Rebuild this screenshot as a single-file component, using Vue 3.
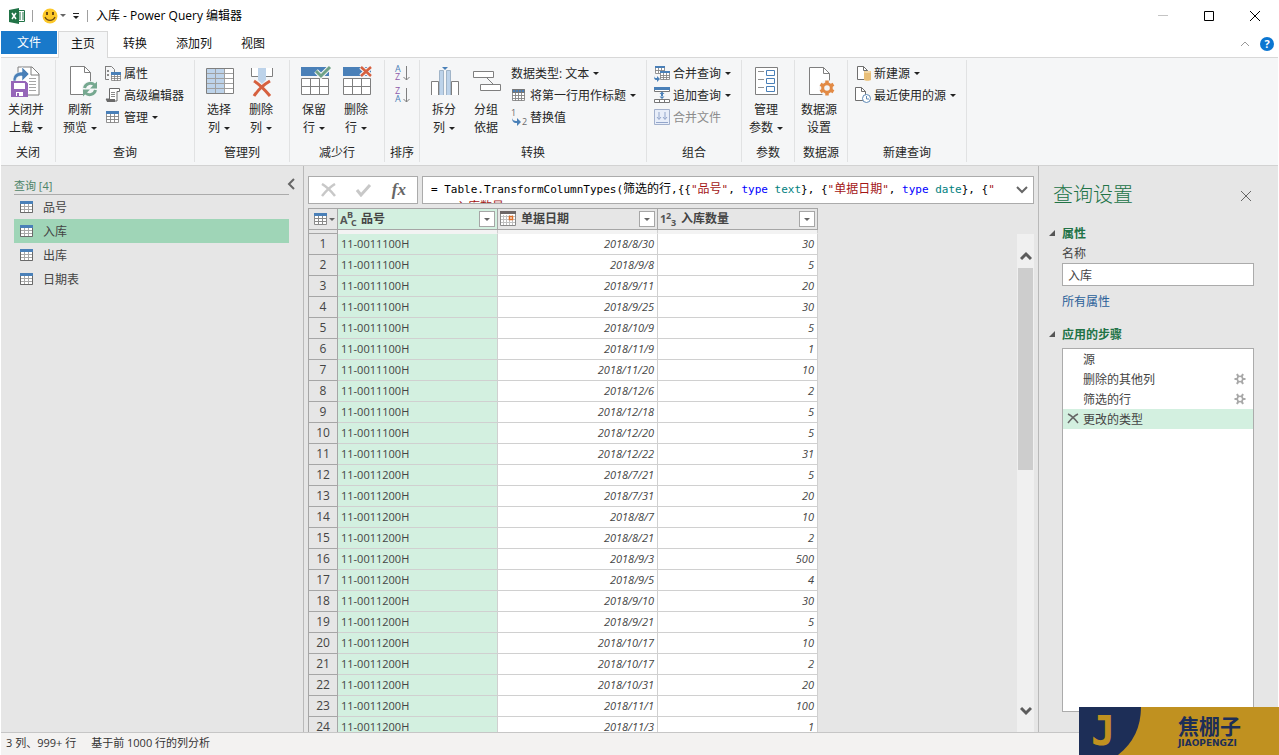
<script setup>
import { ref } from 'vue'

const icons = {
  closeLoad: `<path d="M8 9V2h14l7 7v21H17" fill="#fff" stroke="#7f7f7f"/><path d="M21 2v8h8" fill="none" stroke="#7f7f7f"/><path d="M19 13.500h7M19 16.500h7M19 19.500h7M19 22.500h7M19 25.500h7" stroke="#a6a6a6"/><path d="M3 16c0-7 4-9 9-9V2l7 7-7 7v-5c-4 0-6 1-6 5z" fill="#4a80b8" stroke="#f5f6f7" stroke-width=".6"/><path d="M2 17h13l2 2v12H2z" fill="#fff" stroke="#9566b8" stroke-width="2"/><path d="M2 17h2v8H2zM15 17h2v8h-2zM2 24h15v7H2z" fill="#9566b8"/><path d="M6 27h7v4H6z" fill="#fff"/><path d="M7 28h2v3H7z" fill="#9566b8"/>`,
  refresh: `<path d="M6.500 1.500h14l6 6v22h-20z" fill="#fff" stroke="#7f7f7f"/><path d="M20.500 1.500v6h6" fill="none" stroke="#7f7f7f"/><circle cx="26" cy="24" r="8" fill="#f5f6f7"/><path d="M20.500 23a6 6 0 0 1 10-3M31.500 25a6 6 0 0 1-10 3" fill="none" stroke="#76a890" stroke-width="3"/><path d="M33 16.500v7h-7zM19 31.500v-7h7z" fill="#76a890"/>`,
  chooseCols: `<path d="M3.500 3.500h27v25h-27z" fill="#fff"/><path d="M4 4h18v24H4z" fill="#bdd3ea"/><path d="M12.500 3v25M21.500 3v25M3 8.500h28M3 13.500h28M3 18.500h28M3 23.500h28" stroke="#a0a0a0"/><path d="M3.500 3.500h27v25h-27z" fill="none" stroke="#7f7f7f"/>`,
  removeCols: `<path d="M6.500 3v8.500h7V3M20.500 3v8.500h7V3" fill="#fff" stroke="#7f7f7f"/><path d="M13 3h8v12l-4 4-4-4z" fill="#bdd3ea"/><path d="M9 16c5 3 11 9 16 15M25 16C18 20 13 25 9 31" fill="none" stroke="#d6603f" stroke-width="3"/>`,
  keepRows: `<path d="M3 2h28v9H3z" fill="#4a80b8"/><path d="M3.500 13.500h27v16h-27zM12.500 13v17M21.500 13v17M3 21.500h28" fill="#fff" stroke="#7f7f7f"/><path d="M18 6l5 5 9-9" fill="none" stroke="#f5f6f7" stroke-width="5"/><path d="M18 6l5 5 9-9" fill="none" stroke="#6fa287" stroke-width="3"/>`,
  removeRows: `<path d="M3 2h28v9H3z" fill="#4a80b8"/><path d="M3.500 13.500h27v16h-27zM12.500 13v17M21.500 13v17M3 21.500h28" fill="#fff" stroke="#7f7f7f"/><path d="M21 2l10 9M31 2l-10 9" stroke="#f5f6f7" stroke-width="5"/><path d="M21 2l10 9M31 2l-10 9" stroke="#d6603f" stroke-width="2.500"/>`,
  split: `<path d="M3.500 30V16.500h7V30M30.500 30V16.500h-7V30" fill="#fff" stroke="#7f7f7f"/><path d="M11.500 30V5.500h4V30M22.500 30V5.500h-4V30" fill="#bdd3ea" stroke="#a0b4c8"/><path d="M14 2h6l-3 3z" fill="#4a80b8"/>`,
  group: `<path d="M17 13l6 6" stroke="#7f7f7f"/><path d="M3.500 6.500h20v6h-20zM10.500 19.500h20v6h-20z" fill="#fff" stroke="#7f7f7f"/>`,
  params: `<path d="M5.500 2.500h22v27h-22z" fill="#fff" stroke="#7f7f7f"/><path d="M8 6.500h6M8 14.500h6M8 22.500h6" stroke="#909090"/><path d="M16.500 5.500h8v5h-8zM16.500 13.500h8v5h-8zM16.500 21.500h8v5h-8z" fill="#fff" stroke="#4a80b8"/>`,
  sourceSettings: `<path d="M6.500 2.500h14l6 6v21h-20z" fill="#fff" stroke="#7f7f7f"/><path d="M20.500 2.500v6h6" fill="none" stroke="#7f7f7f"/><circle cx="24" cy="23" r="8" fill="#f5f6f7"/><circle cx="24" cy="23" r="4.300" fill="none" stroke="#e28a45" stroke-width="3"/><path d="M24 15.500v4M24 26.500v4M17.500 19.300l3.200 1.800M27.300 24.900l3.200 1.800M17.500 26.700l3.200-1.800M27.300 21.100l3.200-1.800" stroke="#e28a45" stroke-width="3.500"/>`,
  props: `<path d="M.500 1.500h6l3 3v3M.500 1v13.500H4" fill="none" stroke="#7f7f7f"/><path d="M2 5h2v2H2zM2 9h2v2H2z" fill="#8a8a8a"/><path d="M6.500 8.500h9v7h-9zM9.500 8v8M12.500 8v8M6 11.500h10M6 13.500h10" fill="#fff" stroke="#7f7f7f" stroke-width=".8"/><path d="M6 7h10v3H6z" fill="#4a80b8"/>`,
  script: `<path d="M4.500 12V1.500h10v3h-2.500V14H2.500L1 12z" fill="#fff" stroke="#6a6a6a"/><path d="M1 12h9v3H2z" fill="#6a6a6a"/><path d="M6 5.500h4M6 7.500h4M6 9.500h4" stroke="#8a8a8a"/>`,
  table: `<path d="M1.500 3.500h12v10h-12zM5.500 4v10M9.500 4v10M1 7.500h13M1 10.500h13" fill="#fff" stroke="#858585" stroke-width=".9"/><path d="M1 2h13v3H1z" fill="#4a80b8"/>`,
  firstRow: `<path d="M1.500 2.500h12v11h-12zM4.500 6v8M7.500 6v8M10.500 6v8M1 8.500h13M1 11.500h13" fill="#fff" stroke="#858585" stroke-width=".9"/><path d="M1.500 2.500h12v3h-12zM4.500 3v2M7.500 3v2M10.500 3v2" fill="#4a80b8" stroke="#777"/>`,
  replace: `<text x="0" y="7" font-size="9" fill="#6a6a6a">1</text><text x="11" y="16" font-size="9" fill="#6a6a6a">2</text><path d="M1 8c0 3 2 4 5 4V9l4 4-4 4v-3C2 14 1 12 1 8z" fill="#4a80b8"/>`,
  sortAsc: `<text x="0" y="7" font-size="9" fill="#4a80b8">A</text><text x="0" y="15" font-size="9" fill="#8d5cab">Z</text><path d="M11.500 1v14M8.500 12l3 3 3-3" fill="none" stroke="#7f7f7f"/>`,
  sortDesc: `<text x="0" y="7" font-size="9" fill="#8d5cab">Z</text><text x="0" y="15" font-size="9" fill="#4a80b8">A</text><path d="M11.500 1v14M8.500 12l3 3 3-3" fill="none" stroke="#7f7f7f"/>`,
  merge: `<path d="M1.500 2.500h9v6h-9zM4.500 2v6M7.500 2v6M1 5.500h10" fill="#fff" stroke="#888" stroke-width=".9"/><path d="M1 1h10v2H1z" fill="#4a80b8"/><path d="M6.500 7.500h9v7h-9zM9.500 7v8M12.500 7v8M6 10.500h10M6 12.500h10" fill="#fff" stroke="#888" stroke-width=".9"/><path d="M6 6h10v2H6z" fill="#4a80b8"/><path d="M0 10c0 3 1 3 3 3v-2l3 3-3 3v-2C0 15 0 13 0 10z" fill="#4a80b8"/>`,
  append: `<path d="M.500 1.500h15v3H.500zM.500 12.500h15v3H.500zM5.500 12v4M10.500 12v4" fill="#fff" stroke="#777"/><path d="M0 0h16v3H0z" fill="#4a80b8"/><path d="M8 4.500l2.500 2.500h-5zM8 12l2.500-2.500h-5zM7 7h2v3H7z" fill="#4a80b8"/>`,
  combine: `<path d="M.500 .500h15v15H.500z" fill="#e8eef9" stroke="#a3b1cd"/><path d="M2 13.500h12M5 3v7M3 8l2 2.500L7 8M11 3v7M9 8l2 2.500L13 8" fill="none" stroke="#93a6cb"/>`,
  newSource: `<path d="M2.500 1.500h6l4 4v9h-10z" fill="#fff" stroke="#6f6f6f"/><path d="M8.500 1.500v4h4" fill="none" stroke="#6f6f6f"/><path d="M9 6h7v9c-1 1-6 1-7 0z" fill="#e9bf78"/><ellipse cx="12.500" cy="7" rx="3.500" ry="1" fill="#f3d9a8"/>`,
  recent: `<path d="M.500 .500h6l4 4v9H.500z" fill="#fff" stroke="#6f6f6f"/><path d="M6.500 .500v4h4" fill="none" stroke="#6f6f6f"/><circle cx="11.500" cy="11.500" r="4" fill="#fff" stroke="#5d89b6"/><path d="M11.500 9v3H14" fill="none" stroke="#5d89b6"/>`
}

const groups = [
  { label: '关闭', big: [{ icon: 'closeLoad', lines: ['关闭并', '上载'], caret: true, wide: true }] },
  {
    label: '查询',
    big: [{ icon: 'refresh', lines: ['刷新', '预览'], caret: true }],
    small: [
      { icon: 'props', text: '属性' },
      { icon: 'script', text: '高级编辑器' },
      { icon: 'table', text: '管理', caret: true }
    ]
  },
  {
    label: '管理列',
    big: [
      { icon: 'chooseCols', lines: ['选择', '列'], caret: true },
      { icon: 'removeCols', lines: ['删除', '列'], caret: true }
    ]
  },
  {
    label: '减少行',
    big: [
      { icon: 'keepRows', lines: ['保留', '行'], caret: true },
      { icon: 'removeRows', lines: ['删除', '行'], caret: true }
    ]
  },
  { label: '排序', small: [{ icon: 'sortAsc', aria: '升序排序' }, { icon: 'sortDesc', aria: '降序排序' }], narrow: true },
  {
    label: '转换',
    big: [
      { icon: 'split', lines: ['拆分', '列'], caret: true },
      { icon: 'group', lines: ['分组', '依据'] }
    ],
    small: [
      { text: '数据类型: 文本', caret: true },
      { icon: 'firstRow', text: '将第一行用作标题', caret: true },
      { icon: 'replace', text: '替换值' }
    ]
  },
  {
    label: '组合',
    small: [
      { icon: 'merge', text: '合并查询', caret: true },
      { icon: 'append', text: '追加查询', caret: true },
      { icon: 'combine', text: '合并文件', disabled: true }
    ]
  },
  { label: '参数', big: [{ icon: 'params', lines: ['管理', '参数'], caret: true }] },
  { label: '数据源', big: [{ icon: 'sourceSettings', lines: ['数据源', '设置'] }] },
  {
    label: '新建查询',
    small: [
      { icon: 'newSource', text: '新建源', caret: true },
      { icon: 'recent', text: '最近使用的源', caret: true }
    ]
  }
]

const queries = ['品号', '入库', '出库', '日期表']
const current = ref('入库')
const queryName = ref('入库')

const A = '11-0011100H'
const B = '11-0011200H'
const rows = [
  [A, '2018/8/30', 30], [A, '2018/9/8', 5], [A, '2018/9/11', 20], [A, '2018/9/25', 30],
  [A, '2018/10/9', 5], [A, '2018/11/9', 1], [A, '2018/11/20', 10], [A, '2018/12/6', 2],
  [A, '2018/12/18', 5], [A, '2018/12/20', 5], [A, '2018/12/22', 31], [B, '2018/7/21', 5],
  [B, '2018/7/31', 20], [B, '2018/8/7', 10], [B, '2018/8/21', 2], [B, '2018/9/3', 500],
  [B, '2018/9/5', 4], [B, '2018/9/10', 30], [B, '2018/9/21', 5], [B, '2018/10/17', 10],
  [B, '2018/10/17', 2], [B, '2018/10/31', 20], [B, '2018/11/1', 100], [B, '2018/11/3', 1]
]

const steps = [
  { name: '源' },
  { name: '删除的其他列', gear: true },
  { name: '筛选的行', gear: true },
  { name: '更改的类型', active: true }
]
</script>

<template>
  <div class="app">
    <header class="titlebar">
      <svg class="xl" viewBox="0 0 16 16" width="16" height="16" aria-hidden="true">
        <path d="M9 2.500h6.500v11H9z" fill="#fff" stroke="#217346" />
        <path d="M10 5h2M13 5h2M10 7h2M13 7h2M10 9h2M13 9h2M10 11h2M13 11h2" stroke="#217346" />
        <path d="M0 2l10-2v16L0 14z" fill="#217346" />
        <path d="M3 5l4 6M7 5l-4 6" stroke="#fff" stroke-width="1.500" />
      </svg>
      <span class="bar"></span>
      <button class="smile" aria-label="反馈">
        <svg viewBox="0 0 16 16" width="16" height="16">
          <circle cx="8" cy="8" r="7.500" fill="#fcc829" />
          <path d="M5 4v3M11 4v3" stroke="#6b4a14" stroke-width="2" />
          <path d="M3 9c2 4.500 8 4.500 10 0" fill="none" stroke="#6b4a14" stroke-width="1.300" />
        </svg>
        <i class="caret grey"></i>
      </button>
      <button class="custom" aria-label="自定义快速访问工具栏">
        <svg viewBox="0 0 8 8" width="8" height="8"><path d="M1 1.500h6" stroke="#222" /><path d="M1 4h6L4 7z" fill="#222" /></svg>
      </button>
      <span class="bar"></span>
      <h1>入库 - Power Query 编辑器</h1>
      <div class="winctl">
        <button aria-label="最小化"><svg viewBox="0 0 10 10" width="10" height="10"><path d="M0 4.500h10" stroke="#c4c4c4" /></svg></button>
        <button aria-label="最大化"><svg viewBox="0 0 10 10" width="10" height="10"><path d="M.500 .500h9v9h-9z" fill="none" stroke="#000" /></svg></button>
        <button aria-label="关闭"><svg viewBox="0 0 10 10" width="10" height="10"><path d="M0 0l10 10M10 0L0 10" stroke="#000" /></svg></button>
      </div>
    </header>

    <nav class="tabs">
      <button class="file">文件</button>
      <button class="active">主页</button>
      <button>转换</button>
      <button>添加列</button>
      <button>视图</button>
      <div class="tabtools">
        <button aria-label="折叠功能区"><svg viewBox="0 0 10 6" width="10" height="6"><path d="M1 5l4-4 4 4" fill="none" stroke="#999" /></svg></button>
        <button class="help" aria-label="帮助">?</button>
      </div>
    </nav>

    <section class="ribbon">
      <div v-for="g in groups" :key="g.label" class="group">
        <div class="tools">
          <button v-for="b in g.big" :key="b.icon" class="big" :class="{ wide: b.wide }">
            <svg viewBox="0 0 32 32" width="32" height="32" v-html="icons[b.icon]"></svg>
            <span>{{ b.lines[0] }}</span>
            <span class="second">{{ b.lines[1] }}<i v-if="b.caret" class="caret"></i></span>
          </button>
          <div v-if="g.small" class="stack" :class="{ narrow: g.narrow }">
            <button v-for="s in g.small" :key="s.icon || s.text" class="small" :disabled="s.disabled" :aria-label="s.aria">
              <svg v-if="s.icon" viewBox="0 0 16 16" width="16" height="16" v-html="icons[s.icon]"></svg>
              <span v-if="s.text">{{ s.text }}</span><i v-if="s.caret" class="caret"></i>
            </button>
          </div>
        </div>
        <div class="glabel">{{ g.label }}</div>
      </div>
    </section>

    <main class="body">
      <aside class="queries">
        <div class="qhead">
          <h2>查询 [4]</h2>
          <button aria-label="折叠"><svg viewBox="0 0 8 12" width="8" height="12"><path d="M7 1L2 6l5 5" fill="none" stroke="#666" stroke-width="2" /></svg></button>
        </div>
        <ul>
          <li v-for="q in queries" :key="q">
            <button :class="{ on: q === current }" @click="current = q">
              <svg viewBox="0 0 13 12" width="13" height="12"><path d="M.500 2.500h12v9H.500zM4.500 3v9M8.500 3v9M0 5.500h13M0 8.500h13" fill="#fff" stroke="#a8a8a8" /><path d="M0 0h13v3H0z" fill="#4a80b8" /><path d="M.500 3v8.500h12V3" fill="none" stroke="#6a6a6a" /></svg>
              <span>{{ q }}</span>
            </button>
          </li>
        </ul>
      </aside>

      <section class="center">
        <div class="formula">
          <div class="fbtns">
            <button aria-label="取消"><svg viewBox="0 0 16 14" width="16" height="14"><path d="M1 1c5 3 9 7 13 12M14 1C9 4 5 8 1 13" fill="none" stroke="#c8c8c8" stroke-width="2.500" /></svg></button>
            <button aria-label="确认"><svg viewBox="0 0 16 14" width="16" height="14"><path d="M1 7l4 5 9-10" fill="none" stroke="#c8c8c8" stroke-width="3" /></svg></button>
            <button aria-label="插入步骤" class="fx">fx</button>
          </div>
          <div class="fbox">
            <code>= Table.TransformColumnTypes(<b>筛选的行</b>,{{ '\u007b\u007b' }}<em>"<b>品号</b>"</em>, <u>type</u> <s>text</s>}, {<em>"<b>单据日期</b>"</em>, <u>type</u> <s>date</s>}, {<em>"</em><br /><em class="cont"><b>入库数量</b></em></code>
            <button aria-label="展开编辑栏"><svg viewBox="0 0 12 8" width="12" height="8"><path d="M1 1l5 5 5-5" fill="none" stroke="#666" stroke-width="2" /></svg></button>
          </div>
        </div>

        <div class="gridwrap">
          <div class="gridview">
            <table>
              <colgroup><col class="cn" /><col /><col /><col /></colgroup>
              <thead>
                <tr>
                  <th class="num">
                    <button class="corner" aria-label="表选项">
                      <svg viewBox="0 0 13 12" width="13" height="12"><path d="M.500 2.500h12v9H.500zM4.500 3v9M8.500 3v9M0 5.500h13M0 8.500h13" fill="#fff" stroke="#8a8a8a" /><path d="M0 0h13v3H0z" fill="#4a80b8" /></svg>
                      <i class="caret grey"></i>
                    </button>
                  </th>
                  <th class="sel">
                    <div class="hcell">
                      <svg class="glyph" viewBox="0 0 18 18" width="18" height="18"><g fill="#555"><text x="0" y="14" font-size="11">A</text><text x="7" y="8" font-size="9">B</text><text x="11" y="16" font-size="9">C</text></g></svg>
                      <span>品号</span><button class="filter" aria-label="筛选品号"><i class="caret grey"></i></button>
                    </div>
                  </th>
                  <th>
                    <div class="hcell">
                      <svg viewBox="0 0 18 18" width="18" height="18"><path d="M.500 2.500h15v13H.500z" fill="#fff" stroke="#8a8a8a" /><path d="M3.500 5v10M6.500 5v10M9.500 5v10M12.500 5v10M1 6.500h14M1 9.500h14M1 12.500h14" stroke="#c0c0c0" /><path d="M0 1h16v3H0z" fill="#6d6767" /><path d="M9.500 6.500h3v3h-3z" fill="#fff" stroke="#df702a" stroke-width="1.500" /></svg>
                      <span>单据日期</span><button class="filter" aria-label="筛选单据日期"><i class="caret grey"></i></button>
                    </div>
                  </th>
                  <th>
                    <div class="hcell">
                      <svg class="glyph" viewBox="0 0 18 18" width="18" height="18"><g fill="#555"><text x="0" y="13" font-size="11">1</text><text x="6" y="9" font-size="9">2</text><text x="11" y="16" font-size="9">3</text></g></svg>
                      <span>入库数量</span><button class="filter" aria-label="筛选入库数量"><i class="caret grey"></i></button>
                    </div>
                  </th>
                </tr>
                <tr class="gap"><td class="num"></td><td class="sel"></td><td></td><td></td></tr>
              </thead>
              <tbody>
                <tr v-for="(r, i) in rows" :key="i">
                  <td class="num">{{ i + 1 }}</td>
                  <td class="sel">{{ r[0] }}</td>
                  <td class="r">{{ r[1] }}</td>
                  <td class="r">{{ r[2] }}</td>
                </tr>
              </tbody>
            </table>
          </div>
          <div class="scroll">
            <button aria-label="向上滚动"><svg viewBox="0 0 12 10" width="12" height="10"><path d="M1 8l5-5 5 5" fill="none" stroke="#5c5c5c" stroke-width="3" /></svg></button>
            <div class="track"><div class="thumb"></div></div>
            <button aria-label="向下滚动"><svg viewBox="0 0 12 10" width="12" height="10"><path d="M1 2l5 5 5-5" fill="none" stroke="#5c5c5c" stroke-width="3" /></svg></button>
          </div>
        </div>
      </section>

      <aside class="settings">
        <div class="shead">
          <h2>查询设置</h2>
          <button aria-label="关闭设置"><svg viewBox="0 0 12 12" width="12" height="12"><path d="M1 1l10 10M11 1L1 11" stroke="#666" /></svg></button>
        </div>
        <h3>属性</h3>
        <label for="qname">名称</label>
        <input id="qname" v-model="queryName" type="text" />
        <a href="#">所有属性</a>
        <h3 class="applied">应用的步骤</h3>
        <ul class="steps">
          <li v-for="s in steps" :key="s.name" :class="{ on: s.active }">
            <button v-if="s.active" class="del" aria-label="删除步骤"><svg viewBox="0 0 12 12" width="12" height="12"><path d="M1 1c4 2 7 5 10 9M11 1C7 3 4 6 1 10" fill="none" stroke="#666" stroke-width="1.500" /></svg></button>
            <span v-else class="del"></span>
            <span class="sname">{{ s.name }}</span>
            <button v-if="s.gear" aria-label="编辑设置">
              <svg viewBox="0 0 12 12" width="12" height="12"><circle cx="6" cy="6" r="2.700" fill="none" stroke="#a8a8a8" stroke-width="1.600" /><path d="M3 1l1.500 3M9 1L7.500 4M3 11l1.500-3M9 11L7.500 8M.500 6h3M8.500 6h3" stroke="#a8a8a8" stroke-width="2" /></svg>
            </button>
          </li>
        </ul>
      </aside>
    </main>

    <footer class="status"><span>3 列、999+ 行</span><span>基于前 1000 行的列分析</span></footer>

    <div class="brand">
      <svg viewBox="0 0 200 48" width="200" height="48" aria-hidden="true">
        <path d="M0 0h200v48H0z" fill="#c09120" />
        <path d="M0 0h62Q62 30 39 48H0z" fill="#1d2e57" />
      </svg>
      <span class="mark">J</span>
      <div class="bname"><strong>焦棚子</strong><small>JIAOPENGZI</small></div>
    </div>
  </div>
</template>

<style>
html, body { background: #fff; }
</style>

<style scoped>
.app {
  position: relative;
  display: flex;
  flex-direction: column;
  height: 100vh;
  padding: 0 1px;
  box-sizing: border-box;
  overflow: hidden;
  background: #fff;
  color: #262626;
  font: 12px/18px "Open Sans", "Noto Sans CJK SC", sans-serif;
}
button {
  padding: 0;
  border: 0;
  background: none;
  color: inherit;
  font: inherit;
}
h1, h2, h3, ul { margin: 0; padding: 0; font: inherit; list-style: none; }
svg { display: block; flex: none; }
.caret {
  display: inline-block;
  flex: none;
  border: 3px solid transparent;
  border-top-color: #222;
  border-bottom: 0;
}
.caret.grey { border-top-color: #666; }

.titlebar { display: flex; align-items: center; height: 31px; flex: none; padding-left: 8px; color: #000; }
.bar { flex: none; width: 1px; height: 12px; background: #a0a0a0; margin: 0 8px 0 7px; }
.smile { display: flex; align-items: center; gap: 2px; margin-left: 1px; }
.custom { margin-left: 6px; }
.winctl { display: flex; margin-left: auto; align-self: stretch; }
.winctl button { width: 46px; display: flex; align-items: center; justify-content: center; }

.tabs { display: flex; gap: 1px; height: 26px; flex: none; border-bottom: 1px solid #d8d8d8; color: #111; }
.tabs > button { padding: 0 14px; height: 26px; }
.tabs > .file { height: 23px; padding: 0 16px; background: #1979ca; color: #fff; }
.tabs > .active { height: 27px; padding: 0 12px 2px; background: #f5f6f7; border: 1px solid #d8d8d8; border-bottom: 0; }
.tabtools { display: flex; align-items: center; gap: 10px; margin-left: auto; padding-right: 4px; }
.help { width: 14px; height: 14px; border-radius: 50%; background: #0b76d1; color: #fff; font-size: 11px; font-weight: 700; line-height: 14px; }

.ribbon { display: flex; flex: none; height: 107px; background: #f5f6f7; border-bottom: 1px solid #d2d2d2; }
.group { display: flex; flex-direction: column; margin: 2px 0 3px; border-right: 1px solid #e1e2e3; }
.tools { display: flex; height: 83px; padding: 2px 7px 0 3px; align-items: flex-start; }
.big { width: 42px; display: flex; flex-direction: column; align-items: center; padding-top: 3px; white-space: nowrap; }
.big.wide { width: 44px; }
.big svg { margin-bottom: 4px; overflow: visible; }
.second { display: flex; align-items: center; gap: 4px; }
.stack { padding-left: 4px; }
.stack.narrow { padding: 0 1px 0 7px; }
.small { display: flex; align-items: center; height: 22px; padding-right: 3px; white-space: nowrap; }
.small svg { margin-right: 3px; overflow: visible; }
.small span { padding-top: 1px; }
.narrow .small { padding-right: 0; }
.narrow .small svg { margin-right: 0; }
.small .caret { margin-left: 4px; }
.small:disabled { color: #8c8c8c; }
.glabel { text-align: center; }

.body { flex: 1; min-height: 0; display: flex; background: #e6e6e6; color: #444; }
.queries { width: 302px; flex: none; border-right: 1px solid #b9b9b9; }
.qhead { display: flex; align-items: flex-end; margin: 0 8px 0 13px; padding-top: 12px; }
.qhead h2 { flex: 1; margin-right: -2px; border-bottom: 1px solid #ababab; font-size: 11px; line-height: 16px; color: #4d8468; }
.qhead button { margin-bottom: 5px; }
.queries ul { margin: 0 14px 0 13px; }
.queries li button { width: 100%; height: 24px; padding-left: 6px; display: flex; align-items: center; gap: 10px; }
.queries li span { padding-top: 1px; }
.queries .on { background: #9fd5b7; }

.center { flex: 1; min-width: 0; display: flex; flex-direction: column; padding: 10px 4px 0; }
.formula { display: flex; gap: 4px; height: 28px; flex: none; }
.fbtns, .fbox { box-sizing: border-box; border: 1px solid #ababab; background: #fff; }
.fbtns { width: 110px; display: flex; align-items: center; justify-content: space-between; padding: 0 11px 0 12px; }
.fx { font: italic 700 17px/24px "Liberation Serif", serif; color: #666; }
.fbox { flex: 1; min-width: 0; display: flex; justify-content: space-between; padding: 4px 5px 0 8px; overflow: hidden; }
.fbox button { align-self: flex-start; padding-top: 5px; }
.fbox code { height: 22px; overflow: hidden; font: 11px/18px "DejaVu Sans Mono", "Noto Sans CJK SC", monospace; color: #000; white-space: pre; }
.fbox b { font-weight: 400; font-size: 12px; line-height: 16px; }
.fbox em { font-style: normal; color: #a31515; }
.fbox u { text-decoration: none; color: #0000ff; }
.fbox s { text-decoration: none; color: #008080; }
.cont { padding-left: 25px; }

.gridwrap { flex: 1; min-height: 0; display: flex; justify-content: space-between; margin-top: 4px; overflow: hidden; }
.gridview { overflow: hidden; }
table { table-layout: fixed; width: 510px; border-spacing: 0; }
.cn { width: 30px; }
th, td { box-sizing: border-box; padding: 0; }
th { height: 22px; border: 1px solid #a6a6a6; border-left: 0; background: #e6e6e6; font-weight: 700; }
.hcell { display: flex; align-items: center; height: 20px; padding: 0 2px; line-height: 20px; }
.hcell span { flex: 1; text-align: left; margin-left: 3px; }
.glyph { overflow: visible; }
.filter { width: 16px; height: 16px; border: 1px solid #a6a6a6; background: #fff; display: flex; align-items: center; justify-content: center; }
.corner { display: flex; align-items: center; gap: 2px; padding-left: 5px; }
td { height: 21px; border-right: 1px solid #d0d0d0; border-bottom: 1px solid #d0d0d0; background: #fff; font-size: 11px; line-height: 20px; padding-left: 3px; }
td.sel, th.sel { background: #d3f0e0; }
td.r { text-align: right; font-style: italic; padding-right: 3px; }
.num { border-left: 1px solid #a6a6a6; }
td.num { border-right-color: #a6a6a6; border-bottom-color: #a6a6a6; background: #e6e6e6; text-align: center; font-size: 12px; padding: 0; }
.gap td { height: 4px; line-height: 3px; border-bottom-color: #f3f3f3; background: #f3f3f3; }
.gap td.sel { background: #f3f3f3; }
.gap td.num { border-bottom-color: #a6a6a6; background: #e6e6e6; }

.scroll { width: 17px; margin-top: 26px; display: flex; flex-direction: column; background: #f0f0f0; }
.scroll button { height: 34px; display: flex; align-items: center; justify-content: center; padding-top: 9px; box-sizing: border-box; flex: none; }
.scroll button:last-child { padding: 0 0 9px; }
.track { flex: 1; }
.thumb { height: 47%; margin: 0 1px; background: #cdcdcd; }

.settings { width: 240px; flex: none; box-sizing: border-box; border-left: 1px solid #b9b9b9; padding: 15px 24px 20px 23px; display: flex; flex-direction: column; align-items: stretch; }
.shead { display: flex; justify-content: space-between; align-items: center; margin: 0 2px 15px -9px; }
.shead h2 { font-size: 20px; line-height: 28px; font-weight: 300; color: #217346; }
.shead button { padding-top: 2px; }
h3 { position: relative; font-weight: 700; color: #217346; line-height: 20px; }
h3::before { content: ""; position: absolute; left: -13px; top: 6px; border-left: 6px solid transparent; border-bottom: 6px solid #555; }
.settings label { line-height: 19px; }
.settings input { box-sizing: border-box; width: 100%; height: 23px; border: 1px solid #ababab; padding: 0 5px; font: inherit; color: #444; background: #fff; outline: 0; }
.settings a { margin-top: 7px; color: #2a6099; text-decoration: none; }
.applied { margin-top: 14px; }
.steps { flex: 1; margin-top: 3px; border: 1px solid #ababab; background: #fff; }
.steps li { display: flex; align-items: center; height: 20px; padding-right: 7px; }
.steps .on { background: #d3f0e0; }
.del { width: 20px; display: flex; justify-content: center; }
.sname { flex: 1; padding-top: 1px; }

.status { flex: none; display: flex; gap: 15px; height: 22px; padding-left: 5px; border-top: 1px solid #c6c6c6; background: #f3f2f1; color: #333; font-size: 11px; line-height: 20px; }

.brand { position: absolute; right: 0; bottom: 0; color: #1d2e57; }
.mark { position: absolute; left: 12px; top: 0; font: 700 40px/48px "DejaVu Sans Mono", monospace; color: #c09120; }
.bname { position: absolute; left: 99px; top: 7px; display: flex; flex-direction: column; }
.bname strong { font-size: 21px; line-height: 24px; }
.bname small { font: 700 9px/10px "DejaVu Sans", sans-serif; }
</style>
